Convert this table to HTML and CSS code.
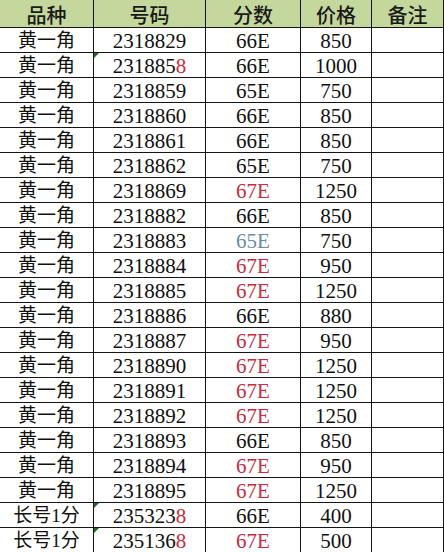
FILE: index.html
```html
<!DOCTYPE html>
<html lang="zh">
<head>
<meta charset="utf-8">
<title>号码表</title>
<link rel="stylesheet" href="styles.css">
</head>
<body>
<table class="sheet">
  <colgroup>
    <col class="c1"><col class="c2"><col class="c3"><col class="c4"><col class="c5">
  </colgroup>
  <thead>
    <tr><th>品种</th><th>号码</th><th>分数</th><th>价格</th><th>备注</th></tr>
  </thead>
  <tbody>
    <tr><td class="cn">黄一角</td><td>2318829</td><td>66E</td><td>850</td><td></td></tr>
    <tr><td class="cn">黄一角</td><td class="flag">231885<span class="red">8</span></td><td>66E</td><td>1000</td><td></td></tr>
    <tr><td class="cn">黄一角</td><td>2318859</td><td>65E</td><td>750</td><td></td></tr>
    <tr><td class="cn">黄一角</td><td>2318860</td><td>66E</td><td>850</td><td></td></tr>
    <tr><td class="cn">黄一角</td><td>2318861</td><td>66E</td><td>850</td><td></td></tr>
    <tr><td class="cn">黄一角</td><td>2318862</td><td>65E</td><td>750</td><td></td></tr>
    <tr><td class="cn">黄一角</td><td>2318869</td><td class="red">67E</td><td>1250</td><td></td></tr>
    <tr><td class="cn">黄一角</td><td>2318882</td><td>66E</td><td>850</td><td></td></tr>
    <tr><td class="cn">黄一角</td><td>2318883</td><td class="blue">65E</td><td>750</td><td></td></tr>
    <tr><td class="cn">黄一角</td><td>2318884</td><td class="red">67E</td><td>950</td><td></td></tr>
    <tr><td class="cn">黄一角</td><td>2318885</td><td class="red">67E</td><td>1250</td><td></td></tr>
    <tr><td class="cn">黄一角</td><td>2318886</td><td>66E</td><td>880</td><td></td></tr>
    <tr><td class="cn">黄一角</td><td>2318887</td><td class="red">67E</td><td>950</td><td></td></tr>
    <tr><td class="cn">黄一角</td><td>2318890</td><td class="red">67E</td><td>1250</td><td></td></tr>
    <tr><td class="cn">黄一角</td><td>2318891</td><td class="red">67E</td><td>1250</td><td></td></tr>
    <tr><td class="cn">黄一角</td><td>2318892</td><td class="red">67E</td><td>1250</td><td></td></tr>
    <tr><td class="cn">黄一角</td><td>2318893</td><td>66E</td><td>850</td><td></td></tr>
    <tr><td class="cn">黄一角</td><td>2318894</td><td class="red">67E</td><td>950</td><td></td></tr>
    <tr><td class="cn">黄一角</td><td>2318895</td><td class="red">67E</td><td>1250</td><td></td></tr>
    <tr><td class="cn">长号1分</td><td class="flag">235323<span class="red">8</span></td><td>66E</td><td>400</td><td></td></tr>
    <tr><td class="cn">长号1分</td><td class="flag">235136<span class="red">8</span></td><td class="red">67E</td><td>500</td><td></td></tr>
  </tbody>
</table>
</body>
</html>
```

FILE: styles.css
```css
html, body {
  margin: 0;
  padding: 0;
  background: #ffffff;
}

.sheet {
  border-collapse: separate;
  border-spacing: 0;
  table-layout: fixed;
  width: 444px;
  font-family: "Liberation Serif", "Noto Sans CJK SC", serif;
  color: #111111;
}

.c1 { width: 94px; }
.c2 { width: 112px; }
.c3 { width: 95px; }
.c4 { width: 71px; }
.c5 { width: 72px; }

.sheet th,
.sheet td {
  padding: 0;
  text-align: center;
  white-space: nowrap;
  border-right: 1px solid #151515;
  border-bottom: 1px solid #151515;
  box-sizing: border-box;
  overflow: hidden;
}

.sheet th {
  height: 28px;
  background: #c4d79c;
  font-family: "Noto Sans CJK SC", sans-serif;
  font-size: 20px;
  font-weight: 500;
  line-height: 24px;
  padding-top: 3px;
  color: #1a1a1a;
}

.sheet td {
  height: 25px;
  font-size: 21px;
  line-height: 22px;
  padding-top: 2px;
}

.sheet td.cn {
  font-size: 19px;
}

.flag {
  position: relative;
}

.flag::before {
  content: "";
  position: absolute;
  left: 0;
  top: 0;
  width: 0;
  height: 0;
  border-top: 5px solid #1f6b2a;
  border-right: 5px solid transparent;
}

.red {
  color: #cc2a3e;
}

.blue {
  color: #6a8ca8;
}
```
